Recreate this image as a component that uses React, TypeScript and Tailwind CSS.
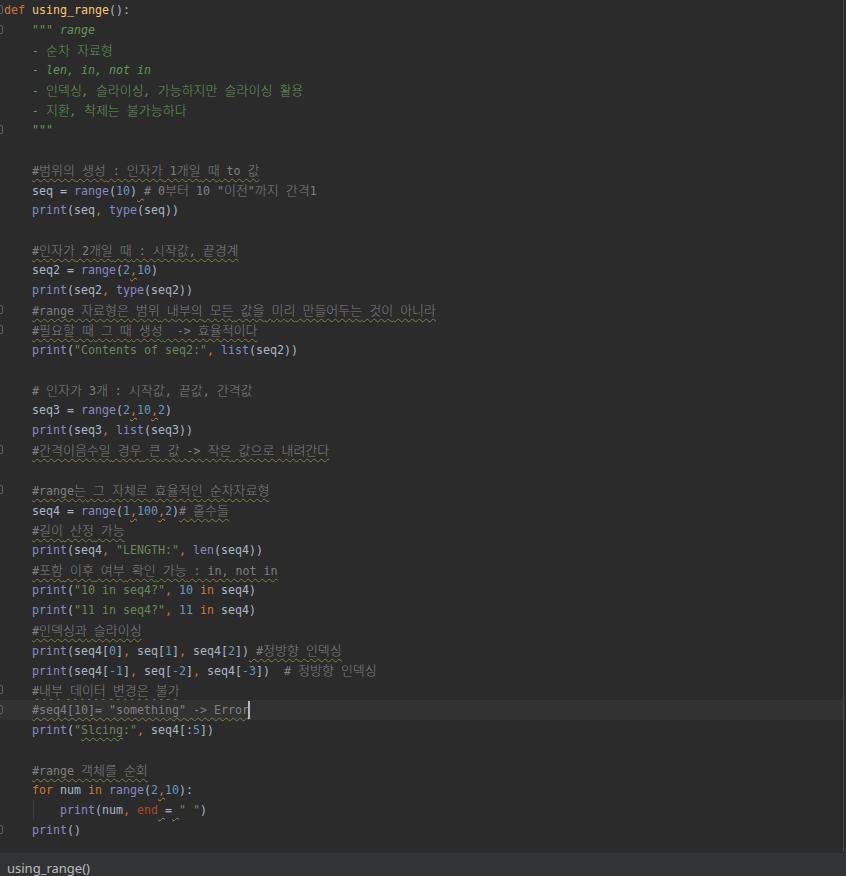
import React from "react";

type Seg = [string, string];

const K = "text-[#cc7832]";
const F = "text-[#ffc66d]";
const D = "text-[#629755] italic";
const C = "text-[#808080]";
const B = "text-[#8888c6]";
const N = "text-[#6897bb]";
const S = "text-[#6a8759]";
const T = "text-[#a9b7c6]";
const P = "text-[#aa4926]";
const CW =
  "text-[#808080] underline decoration-wavy decoration-[#807c44] decoration-1 underline-offset-[3px]";
const SP =
  "underline decoration-wavy decoration-[#9a8a4c] decoration-1 underline-offset-[3px]";
const KW =
  "text-[#cc7832] underline decoration-wavy decoration-[#c0862f] decoration-1 underline-offset-[3px]";
const SW =
  "text-[#6a8759] underline decoration-wavy decoration-[#6a8f45] decoration-1 underline-offset-[3px]";

const I = "    ";

const lines: Seg[][] = [
  [["def", K], [" ", T], ["using_range", F], ["():", T]],
  [[I + '""" range', D]],
  [[I + "- 순차 자료형", D]],
  [[I + "- len, in, not in", D]],
  [[I + "- 인덱싱, 슬라이싱, 가능하지만 슬라이싱 활용", D]],
  [[I + "- 지환, 착제는 불가능하다", D]],
  [[I + '"""', D]],
  [],
  [[I, T], ["#범위의 생성 : 인자가 1개일 때 to 값", CW]],
  [
    [I + "seq = ", T],
    ["range", B],
    ["(", T],
    ["10", N],
    [")", T],
    [" ", SP],
    ['# 0부터 10 "이전"까지 간격1', C],
  ],
  [[I, T], ["print", B], ["(seq", T], [",", K], [" ", T], ["type", B], ["(seq))", T]],
  [],
  [[I, T], ["#인자가 2개일 때 : 시작값, 끝경계", CW]],
  [[I + "seq2 = ", T], ["range", B], ["(", T], ["2", N], [",", KW], ["10", N], [")", T]],
  [[I, T], ["print", B], ["(seq2", T], [",", K], [" ", T], ["type", B], ["(seq2))", T]],
  [[I, T], ["#range 자료형은 범위 내부의 모든 값을 미리 만들어두는 것이 아니라", CW]],
  [[I, T], ["#필요할 때 그 때 생성  -> 효율적이다", CW]],
  [
    [I, T],
    ["print", B],
    ["(", T],
    ['"Contents of seq2:"', S],
    [",", K],
    [" ", T],
    ["list", B],
    ["(seq2))", T],
  ],
  [],
  [[I, T], ["# 인자가 3개 : 시작값, 끝값, 간격값", C]],
  [
    [I + "seq3 = ", T],
    ["range", B],
    ["(", T],
    ["2", N],
    [",", KW],
    ["10", N],
    [",", KW],
    ["2", N],
    [")", T],
  ],
  [[I, T], ["print", B], ["(seq3", T], [",", K], [" ", T], ["list", B], ["(seq3))", T]],
  [[I, T], ["#간격이음수일 경우 큰 값 -> 작은 값으로 내려간다", CW]],
  [],
  [[I, T], ["#range는 그 자체로 효율적인 순차자료형", CW]],
  [
    [I + "seq4 = ", T],
    ["range", B],
    ["(", T],
    ["1", N],
    [",", KW],
    ["100", N],
    [",", KW],
    ["2", N],
    [")", T],
    ["# 홀수들", CW],
  ],
  [[I, T], ["#길이 산정 가능", CW]],
  [
    [I, T],
    ["print", B],
    ["(seq4", T],
    [",", K],
    [" ", T],
    ['"LENGTH:"', S],
    [",", K],
    [" ", T],
    ["len", B],
    ["(seq4))", T],
  ],
  [[I, T], ["#포함 이후 여부 확인 가능 : in, not in", CW]],
  [
    [I, T],
    ["print", B],
    ["(", T],
    ['"10 in seq4?"', S],
    [",", K],
    [" ", T],
    ["10", N],
    [" ", T],
    ["in", K],
    [" seq4)", T],
  ],
  [
    [I, T],
    ["print", B],
    ["(", T],
    ['"11 in seq4?"', S],
    [",", K],
    [" ", T],
    ["11", N],
    [" ", T],
    ["in", K],
    [" seq4)", T],
  ],
  [[I, T], ["#인덱싱과 슬라이싱", CW]],
  [
    [I, T],
    ["print", B],
    ["(seq4[", T],
    ["0", N],
    ["]", T],
    [",", K],
    [" seq[", T],
    ["1", N],
    ["]", T],
    [",", K],
    [" seq4[", T],
    ["2", N],
    ["])", T],
    [" ", SP],
    ["#정방향 인덱싱", CW],
  ],
  [
    [I, T],
    ["print", B],
    ["(seq4[", T],
    ["-1", N],
    ["]", T],
    [",", K],
    [" seq[", T],
    ["-2", N],
    ["]", T],
    [",", K],
    [" seq4[", T],
    ["-3", N],
    ["])", T],
    ["  ", T],
    ["# 정방향 인덱싱", C],
  ],
  [[I, T], ["#내부 데이터 변경은 불가", CW]],
  [[I, T], ['#seq4[10]= "something" -> Error', CW]],
  [
    [I, T],
    ["print", B],
    ["(", T],
    ['"', S],
    ["Slcing", SW],
    [':"', S],
    [",", K],
    [" seq4[:", T],
    ["5", N],
    ["])", T],
  ],
  [],
  [[I, T], ["#range 객체를 순회", CW]],
  [
    [I, T],
    ["for", K],
    [" num ", T],
    ["in", K],
    [" ", T],
    ["range", B],
    ["(", T],
    ["2", N],
    [",", KW],
    ["10", N],
    ["):", T],
  ],
  [
    [I + I, T],
    ["print", B],
    ["(num", T],
    [",", K],
    [" ", T],
    ["end", P],
    [" ", SP],
    ["=", T],
    [" ", SP],
    ['" "', S],
    [")", T],
  ],
  [[I, T], ["print", B], ["()", T]],
];

const foldLines = new Set([1, 2, 7, 16, 17, 23, 25, 35, 36, 42]);

function renderText(t: string) {
  const parts = t.split(/([\u3131-\uD7A3]+)/);
  return parts.map((p, i) =>
    i % 2 === 1 ? (
      <span
        key={i}
        className="not-italic font-light text-[13px] font-['Noto_Sans_CJK_KR',sans-serif]"
      >
        {p}
      </span>
    ) : (
      <React.Fragment key={i}>{p}</React.Fragment>
    )
  );
}

export default function App() {
  return (
    <div className="w-[846px] h-[876px] bg-[#2b2b2b] flex flex-col overflow-hidden">
      <div className="relative h-[857px] flex">
        <div className="relative flex-1 font-['DejaVu_Sans_Mono','Noto_Sans_CJK_KR',monospace] text-[11.63px] leading-[20px] text-[#a9b7c6]">
          {lines.map((segs, idx) => {
            const ln = idx + 1;
            const current = ln === 36;
            return (
              <div
                key={idx}
                className={
                  current
                    ? "relative h-[20px] whitespace-pre pl-[4px] bg-[#323232]"
                    : "relative h-[20px] whitespace-pre pl-[4px]"
                }
              >
                {foldLines.has(ln) && (
                  <span className="absolute left-[-6px] top-[5px] w-[9px] h-[9px] border border-[#5f5f5f] rounded-[2px]" />
                )}
                {segs.map(([t, c], i) => (
                  <span key={i} className={c}>
                    {renderText(t)}
                  </span>
                ))}
                {current && (
                  <span className="absolute left-[248px] top-[1px] w-[2px] h-[18px] bg-[#bbbbbb]" />
                )}
                {ln === 41 && (
                  <span className="absolute left-[33px] top-0 w-px h-[20px] bg-[#3b3b3b]" />
                )}
              </div>
            );
          })}
        </div>
        <div className="w-px bg-[#4b4b4b]" />
        <div className="w-[2px] bg-[#2b2b2b]" />
      </div>
      <div className="flex-1 bg-[#313335] border-t border-[#2b2b2b] pl-[7px] pt-[7px] font-['Noto_Sans','Liberation_Sans',sans-serif] text-[13px] leading-[16px] text-[#bbbbbb]">
        using_range()
      </div>
    </div>
  );
}
